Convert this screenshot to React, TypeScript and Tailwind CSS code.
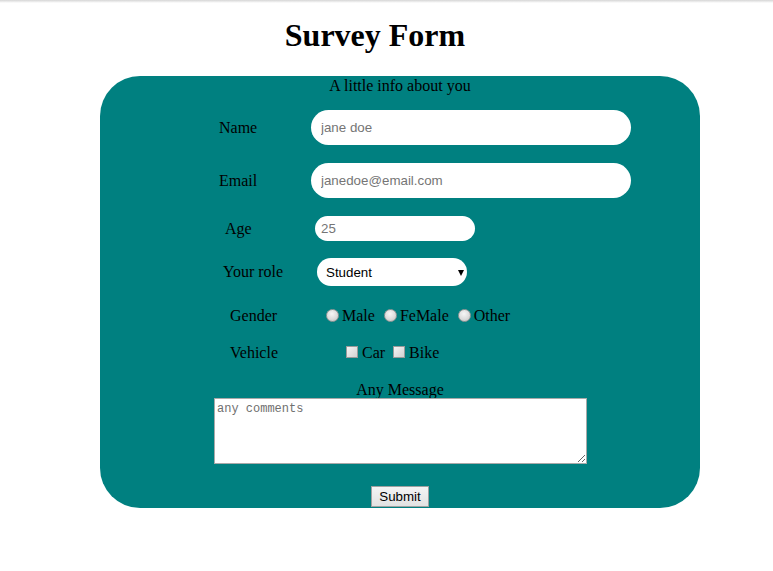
import React from "react";

const serif = { fontFamily: '"Liberation Serif", "Times New Roman", serif' };

function Radio({ label }: { label: string }) {
  return (
    <label className="flex items-center">
      <span className="mr-[3px] mt-[-2px] inline-block h-[13px] w-[13px] rounded-full border border-[#9a9a9a] bg-[radial-gradient(circle_at_45%_35%,#f6f6f6_0%,#dcdcdc_55%,#bdbdbd_100%)]" />
      <span>{label}</span>
    </label>
  );
}

function Check({ label }: { label: string }) {
  return (
    <label className="flex items-center">
      <span className="mr-[4px] mt-[-2px] inline-block h-[12px] w-[12px] border border-[#9a9a9a] bg-[linear-gradient(135deg,#f4f4f4,#d2d2d2)]" />
      <span>{label}</span>
    </label>
  );
}

export default function App() {
  return (
    <div className="min-h-[571px] w-[773px] bg-white text-black" style={serif}>
      <div className="h-[3px] bg-gradient-to-b from-[#d6d6d6] to-white" />
      <h1 className="mt-[14px] w-[750px] text-center text-[32px] font-bold leading-[37px]">
        Survey Form
      </h1>
      <form className="ml-[100px] mt-[22px] w-[600px] rounded-[40px] bg-[#008080] pb-[1px] text-[16px]">
        <div className="h-[18px] text-center leading-[20px]">A little info about you</div>

        <div className="mt-[16px] flex h-[35px] items-center">
          <span className="ml-[119px] w-[92px]">Name</span>
          <input
            className="h-[35px] w-[320px] rounded-full bg-white px-[10px] text-[13.33px] outline-none placeholder:text-[#757575]"
            style={{ fontFamily: '"Liberation Sans", Arial, sans-serif' }}
            placeholder="jane doe"
          />
        </div>

        <div className="mt-[18px] flex h-[35px] items-center">
          <span className="ml-[119px] w-[92px]">Email</span>
          <input
            className="h-[35px] w-[320px] rounded-full bg-white px-[10px] text-[13.33px] outline-none placeholder:text-[#757575]"
            style={{ fontFamily: '"Liberation Sans", Arial, sans-serif' }}
            placeholder="janedoe@email.com"
          />
        </div>

        <div className="mt-[18px] flex h-[25px] items-center">
          <span className="ml-[125px] w-[90px]">Age</span>
          <input
            className="h-[25px] w-[160px] rounded-full bg-white px-[6px] text-[13.33px] outline-none placeholder:text-[#757575]"
            style={{ fontFamily: '"Liberation Sans", Arial, sans-serif' }}
            placeholder="25"
          />
        </div>

        <div className="mt-[17px] flex h-[28px] items-center">
          <span className="ml-[123px] w-[94px]">Your role</span>
          <div className="relative h-[28px] w-[150px]">
            <select
              className="h-[28px] w-[150px] appearance-none rounded-full bg-white pl-[9px] pt-[1px] text-[13.33px] text-black outline-none"
              style={{ fontFamily: '"Liberation Sans", Arial, sans-serif' }}
              defaultValue="Student"
            >
              <option>Student</option>
              <option>Full Time Job</option>
              <option>Other</option>
            </select>
            <svg className="pointer-events-none absolute left-[141px] top-[12px]" width="6" height="6" viewBox="0 0 6 6">
              <path d="M0 0 H6 L3 6 Z" fill="#000" />
            </svg>
          </div>
        </div>

        <div className="mt-[19px] flex h-[20px] items-center pt-[2px]">
          <span className="ml-[130px] w-[96px]">Gender</span>
          <div className="flex items-center gap-[9px]">
            <Radio label="Male" />
            <Radio label="FeMale" />
            <Radio label="Other" />
          </div>
        </div>

        <div className="mt-[17px] flex h-[20px] items-center pt-[2px]">
          <span className="ml-[130px] w-[116px]">Vehicle</span>
          <div className="flex items-center gap-[8px]">
            <Check label="Car" />
            <Check label="Bike" />
          </div>
        </div>

        <div className="mt-[18px] h-[18px] text-center leading-[20px]">Any Message</div>
        <div className="flex">
          <textarea
            className="ml-[114px] block h-[66px] w-[373px] resize border border-[#a9a9a9] bg-white px-[2px] pt-[3px] text-[12px] leading-[15px] outline-none placeholder:text-[#6f6f6f]"
            style={{ fontFamily: '"Liberation Mono", "Courier New", monospace' }}
            placeholder="any comments"
          />
        </div>

        <div className="mt-[22px] flex h-[21px] justify-center">
          <button
            type="button"
            className="h-[21px] w-[58px] border border-[#a0a0a0] bg-[linear-gradient(#f4f4f4,#e2e2e2)] text-[13.33px] leading-[19px] text-black"
            style={{ fontFamily: '"Liberation Sans", Arial, sans-serif' }}
          >
            Submit
          </button>
        </div>
      </form>
    </div>
  );
}
